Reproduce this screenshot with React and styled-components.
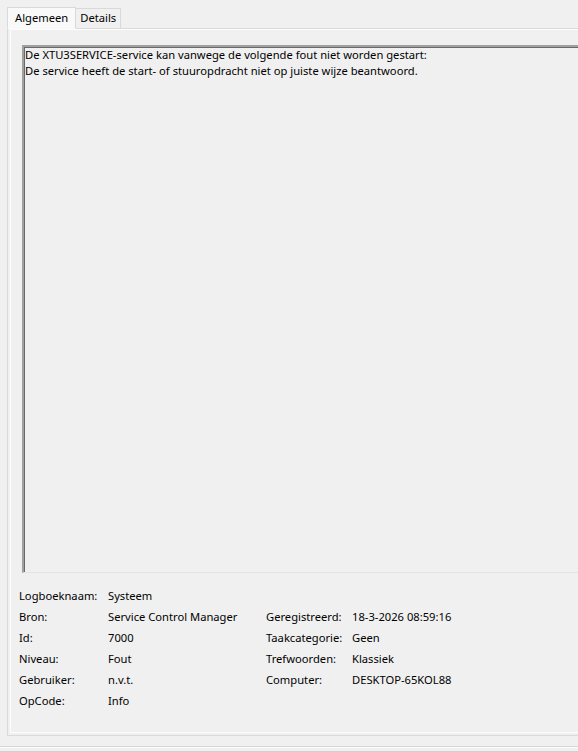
import React from 'react';
import styled, { createGlobalStyle } from 'styled-components';

const GlobalStyle = createGlobalStyle`
  html, body {
    margin: 0;
    padding: 0;
    background: #f0f0f0;
  }
  body {
    font-family: "Segoe UI", "Noto Sans", "Open Sans", sans-serif;
    font-size: 11.2px;
    color: #000;
    overflow: hidden;
  }
`;

const Page = styled.div`
  width: 578px;
  height: 752px;
  display: flex;
  flex-direction: column;
  overflow: hidden;
`;

const TabStrip = styled.div`
  display: flex;
  align-items: flex-end;
  padding: 6px 0 0 7px;
  height: 22px;
  position: relative;
  z-index: 1;
`;

const Tab = styled.div`
  box-sizing: border-box;
  height: ${p => (p.$active ? '22px' : '20px')};
  padding: 0 ${p => (p.$active ? '7px' : '4px')};
  display: flex;
  align-items: center;
  background: ${p => (p.$active ? '#f9f9f9' : '#f0f0f0')};
  border: 1px solid #d9d9d9;
  border-bottom: ${p => (p.$active ? '1px solid #f9f9f9' : 'none')};
  margin-left: ${p => (p.$active ? '0' : '-1px')};
  margin-bottom: ${p => (p.$active ? '-1px' : '0')};
  line-height: 16px;
`;

const TabPanel = styled.div`
  margin-left: 7px;
  margin-right: -20px;
  height: 710px;
  box-sizing: border-box;
  border: 1px solid #dadada;
  display: flex;
`;

const Frame = styled.div`
  flex: 1;
  margin: 0 0 2px 2px;
  border-top: 1px solid #fdfdfd;
  border-left: 1px solid #fdfdfd;
  border-bottom: 1px solid #fdfdfd;
  padding: 15px 0 0 11px;
  display: flex;
  flex-direction: column;
`;

const MessageBox = styled.div`
  box-sizing: border-box;
  height: 528px;
  border-top: 2px solid #a0a0a0;
  border-left: 2px solid #a0a0a0;
  border-bottom: 1px solid #e3e3e3;
  box-shadow: inset 1px 1px 0 #696969;
  padding: 0 0 0 1px;
  line-height: 16px;
  white-space: pre;
`;

const PropGrid = styled.div`
  display: grid;
  grid-template-columns: 89px 158px 86px 1fr;
  grid-auto-rows: 21px;
  margin: 12px 0 0 -3px;
  align-items: center;
`;

const Label = styled.div`
  white-space: nowrap;
`;

const Value = styled.div`
  white-space: nowrap;
`;

const Footer = styled.div`
  margin-top: 10px;
  height: 4px;
  border-top: 1px solid #d6d6d6;
  border-bottom: 1px solid #d0d0d0;
  box-shadow: inset 0 1px 0 #fdfdfd;
`;

const message =
  'De XTU3SERVICE-service kan vanwege de volgende fout niet worden gestart:\n' +
  'De service heeft de start- of stuuropdracht niet op juiste wijze beantwoord.';

const rows = [
  ['Logboeknaam:', 'Systeem', '', ''],
  ['Bron:', 'Service Control Manager', 'Geregistreerd:', '18-3-2026 08:59:16'],
  ['Id:', '7000', 'Taakcategorie:', 'Geen'],
  ['Niveau:', 'Fout', 'Trefwoorden:', 'Klassiek'],
  ['Gebruiker:', 'n.v.t.', 'Computer:', 'DESKTOP-65KOL88'],
  ['OpCode:', 'Info', '', ''],
];

export default function App() {
  return (
    <Page>
      <GlobalStyle />
      <TabStrip>
        <Tab $active>Algemeen</Tab>
        <Tab>Details</Tab>
      </TabStrip>
      <TabPanel>
        <Frame>
          <MessageBox>{message}</MessageBox>
          <PropGrid>
            {rows.map(([l1, v1, l2, v2]) => (
              <React.Fragment key={l1}>
                <Label>{l1}</Label>
                <Value>{v1}</Value>
                <Label>{l2}</Label>
                <Value>{v2}</Value>
              </React.Fragment>
            ))}
          </PropGrid>
        </Frame>
      </TabPanel>
      <Footer />
    </Page>
  );
}
